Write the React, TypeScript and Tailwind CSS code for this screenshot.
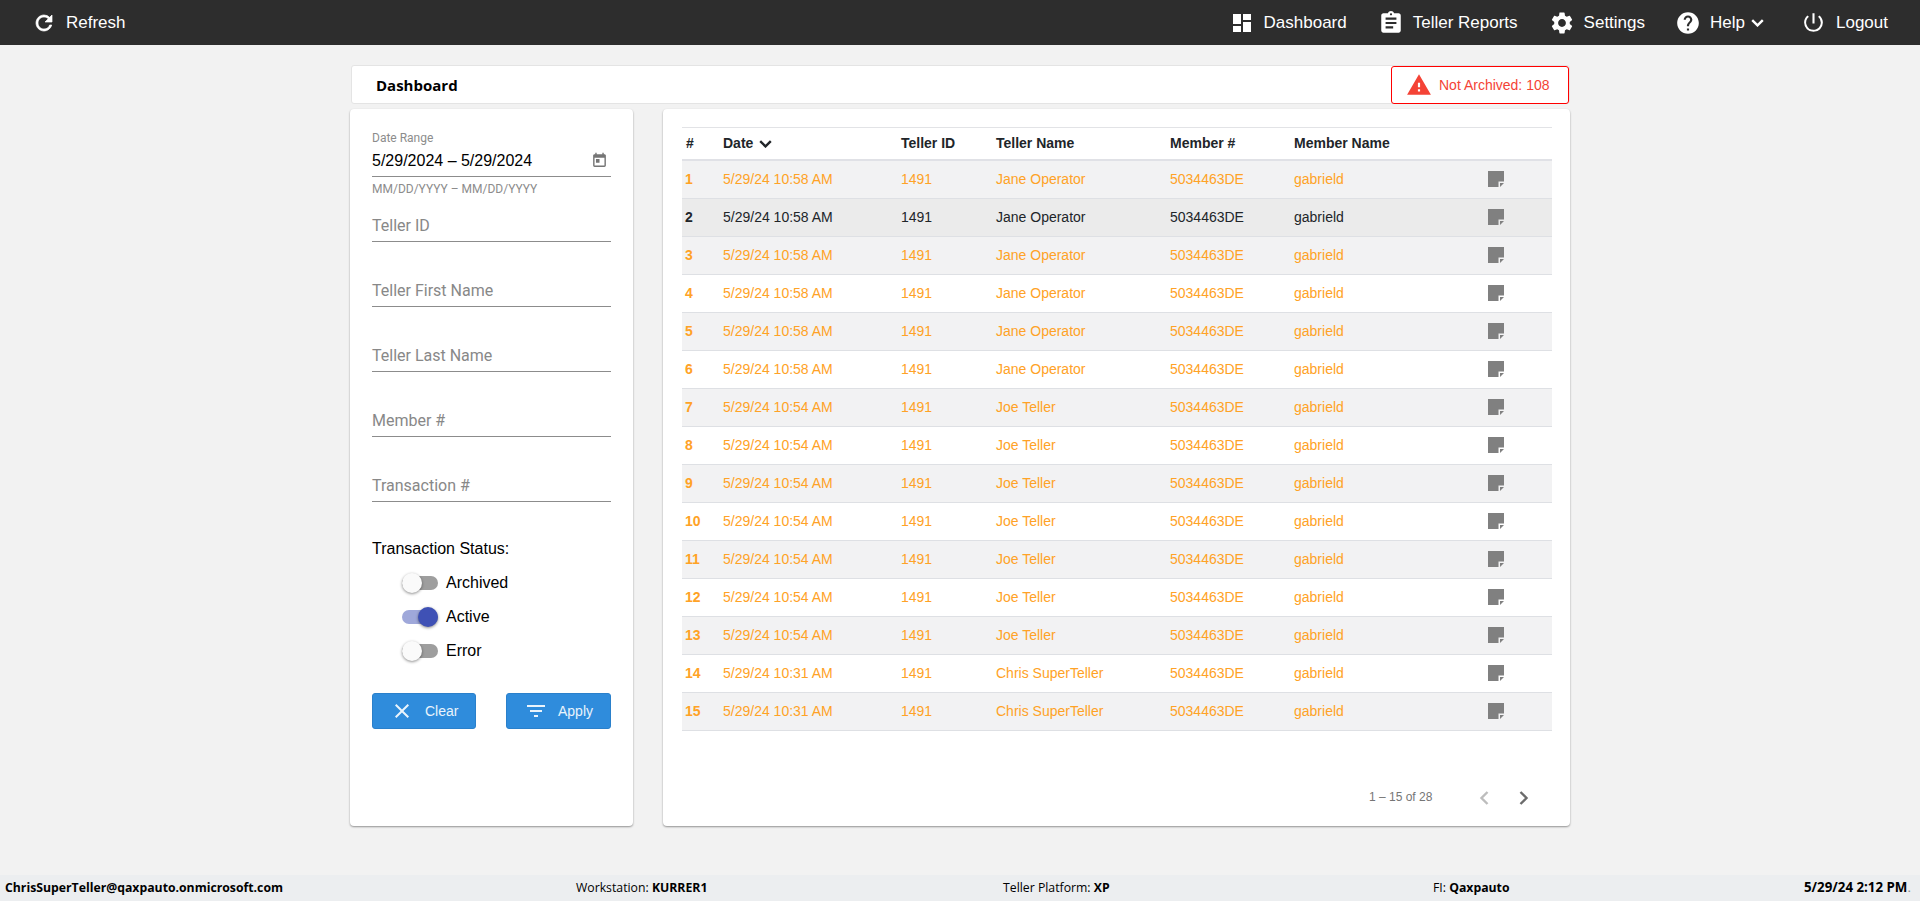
// App.tsx
import React from 'react';
import {
  MdDashboard,
  MdAssignment,
  MdSettings,
  MdHelp,
  MdPowerSettingsNew,
  MdWarning,
  MdToday,
  MdClose,
  MdFilterList,
} from 'react-icons/md';

type Row = { date: string; name: string };

const rows: Row[] = [
  ...Array(6).fill({ date: '5/29/24 10:58 AM', name: 'Jane Operator' }),
  ...Array(7).fill({ date: '5/29/24 10:54 AM', name: 'Joe Teller' }),
  ...Array(2).fill({ date: '5/29/24 10:31 AM', name: 'Chris SuperTeller' }),
];

const RefreshIcon = () => (
  <svg width="24" height="24" viewBox="0 0 24 24" fill="currentColor" stroke="currentColor" strokeWidth="0.7" className="mr-[10px]">
    <path d="M17.65 6.35A7.958 7.958 0 0012 4c-4.42 0-7.99 3.58-7.99 8s3.57 8 7.99 8c3.73 0 6.84-2.55 7.73-6h-2.08A5.99 5.99 0 0112 18c-3.31 0-6-2.69-6-6s2.69-6 6-6c1.66 0 3.14.69 4.22 1.78L13 11h7V4l-2.35 2.35z" />
  </svg>
);

const ChevronDown = ({ className }: { className: string }) => (
  <svg width="13" height="8" viewBox="0 0 13 8" fill="none" stroke="currentColor" strokeWidth="2.4" className={className}>
    <path d="M1.2 1.2l5.3 5.2 5.3-5.2" />
  </svg>
);

const NoteIcon = () => (
  <svg width="16" height="16" viewBox="0 0 16 16" className="shrink-0 -mt-[2px]">
    <path d="M0 0h16v10.5h-5.5V16H0z" fill="#808080" />
    <path d="M12 12h4l-4 4z" fill="#808080" />
  </svg>
);

const NavItem = ({ icon, label, className }: { icon: React.ReactNode; label: string; className: string }) => (
  <div className={`flex items-center ${className}`}>
    {icon}
    <span>{label}</span>
  </div>
);

const FilterField = ({ label }: { label: string }) => (
  <div className="h-[65px] flex flex-col justify-end">
    <div className="border-b border-[#8c8c8c] h-[32px] text-base leading-[32px] text-[#888888]">{label}</div>
  </div>
);

const StatusSwitch = ({ label, on }: { label: string; on?: boolean }) => (
  <div className="h-[34px] flex items-center pl-[30px]">
    <div className="relative w-9 h-[14px] rounded-full mr-2">
      <div className={`absolute inset-0 rounded-full ${on ? 'bg-[#9fa8da]' : 'bg-[#9e9e9e]'}`} />
      <div
        className={`absolute top-[-3px] w-5 h-5 rounded-full shadow-[0_1px_3px_rgba(0,0,0,0.45)] ${
          on ? 'right-0 bg-[#3f51b5]' : 'left-0 bg-[#fafafa]'
        }`}
      />
    </div>
    <span className="text-base text-black font-['Liberation_Sans',sans-serif]">{label}</span>
  </div>
);

export default function App() {
  return (
    <div className="h-screen overflow-hidden flex flex-col bg-[#f2f2f2] font-['Liberation_Sans',Arial,sans-serif]">
      <header className="h-[45px] shrink-0 bg-[#2d2d2d] text-white text-[17px] flex items-center pl-[32px]">
        <NavItem icon={<RefreshIcon />} label="Refresh" className="" />
        <div className="ml-auto flex items-center">
          <NavItem icon={<MdDashboard size={24} className="mr-[10px]" />} label="Dashboard" className="mr-[31px]" />
          <NavItem icon={<MdAssignment size={26} className="mr-[9px]" />} label="Teller Reports" className="mr-[31px]" />
          <NavItem icon={<MdSettings size={26} className="mr-[9px]" />} label="Settings" className="mr-[30px]" />
          <div className="flex items-center mr-[37px]">
            <MdHelp size={26} className="mr-[9px]" />
            <span>Help</span>
            <ChevronDown className="ml-[6px] mt-[1px]" />
          </div>
          <NavItem icon={<MdPowerSettingsNew size={25} className="mr-[10px]" />} label="Logout" className="mr-[32px]" />
        </div>
      </header>

      <main className="flex-1 w-[1220px] mx-auto pt-5">
        <div className="h-[39px] bg-white border border-[#e4e4e4] rounded-[3px] flex items-center justify-between ml-px">
          <span className="pl-[24px] pt-[1px] text-[15px] font-bold text-black font-['Open_Sans',sans-serif]">Dashboard</span>
          <div className="h-[38px] w-[178px] border border-[#f00] rounded-[3px] bg-white flex items-center pl-[14px] text-[14px] text-[#f44336]">
            <MdWarning size={26} className="mr-[7px]" />
            <span className="pt-[1px]">Not Archived: 108</span>
          </div>
        </div>

        <div className="mt-[5px] flex gap-[30px] h-[717px]">
          <aside className="w-[283px] bg-white rounded-[4px] shadow-[0_1px_2px_rgba(0,0,0,0.4)] px-[22px] pt-[22px] font-['Roboto',sans-serif]">
            <div className="text-xs leading-[14px] text-[#8c8c8c]">Date Range</div>
            <div className="h-[32px] border-b border-[#8c8c8c] flex items-center justify-between text-base text-black pr-[3px] font-['Liberation_Sans',sans-serif]">
              <span>5/29/2024 – 5/29/2024</span>
              <MdToday size={17} className="text-[#757575]" />
            </div>
            <div className="mt-[4px] text-xs leading-[16px] text-[#8c8c8c]">MM/DD/YYYY – MM/DD/YYYY</div>
            <div>
              <div className="h-[45px] flex flex-col justify-end">
                <div className="border-b border-[#8c8c8c] h-[32px] text-base leading-[32px] text-[#888888]">Teller ID</div>
              </div>
              <FilterField label="Teller First Name" />
              <FilterField label="Teller Last Name" />
              <FilterField label="Member #" />
              <FilterField label="Transaction #" />
            </div>
            <div className="mt-[37px] text-base leading-5 text-black font-['Liberation_Sans',sans-serif]">Transaction Status:</div>
            <div className="mt-[7px]">
              <StatusSwitch label="Archived" />
              <StatusSwitch label="Active" on />
              <StatusSwitch label="Error" />
            </div>
            <div className="mt-[25px] flex justify-between font-['Liberation_Sans',sans-serif]">
              <button className="w-[104px] h-9 bg-[#2f8cdc] border border-[#2a80cb] rounded-[3px] text-white/90 text-[14px] flex items-center pl-[17px] gap-[11px]">
                <MdClose size={24} />
                <span>Clear</span>
              </button>
              <button className="w-[105px] h-9 bg-[#2f8cdc] border border-[#2a80cb] rounded-[3px] text-white/90 text-[14px] flex items-center pl-[17px] gap-[10px]">
                <MdFilterList size={24} />
                <span>Apply</span>
              </button>
            </div>
          </aside>

          <section className="w-[907px] bg-white rounded-[4px] shadow-[0_1px_2px_rgba(0,0,0,0.4)] pl-[19px] pr-[18px] pt-[18px] flex flex-col">
            <div className="h-[34px] shrink-0 border-t border-b-2 border-t-[#e2e3e6] border-b-[#e0e1e6] flex items-center text-[14px] font-bold text-[#212529]">
              <div className="w-[38px] pl-[4px]">#</div>
              <div className="w-[178px] pl-[3px] flex items-center">
                Date
                <ChevronDown className="ml-[6px] mt-[1px]" />
              </div>
              <div className="w-[95px] pl-[3px]">Teller ID</div>
              <div className="w-[174px] pl-[3px]">Teller Name</div>
              <div className="w-[124px] pl-[3px]">Member #</div>
              <div className="pl-[3px]">Member Name</div>
            </div>
            {rows.map((r, i) => (
              <div
                key={i}
                className={`h-[38px] shrink-0 border-b border-[#dee0e4] flex items-center text-[14px] ${
                  i === 1 ? 'bg-[#ebebeb] text-[#212529]' : 'text-[#ffa226]'
                } ${i !== 1 && i % 2 === 0 ? 'bg-[#f2f2f3]' : ''}`}
              >
                <div className="w-[38px] pl-[3px] font-bold">{i + 1}</div>
                <div className="w-[178px] pl-[3px]">{r.date}</div>
                <div className="w-[95px] pl-[3px]">1491</div>
                <div className="w-[174px] pl-[3px]">{r.name}</div>
                <div className="w-[124px] pl-[3px]">5034463DE</div>
                <div className="w-[197px] pl-[3px]">gabrield</div>
                <NoteIcon />
              </div>
            ))}
            <div className="mt-[60px] flex items-center text-xs text-[#757575] pl-[687px] whitespace-nowrap">
              <span className="-mt-[3px] w-[62px]">1 – 15 of 28</span>
              <svg width="10" height="14" viewBox="0 0 10 14" fill="none" stroke="#bdbdbd" strokeWidth="2.4" className="ml-[48px]">
                <path d="M8.5 1L2.5 7l6 6" />
              </svg>
              <svg width="10" height="14" viewBox="0 0 10 14" fill="none" stroke="#6b6b6b" strokeWidth="2.4" className="ml-[30px]">
                <path d="M1.5 1l6 6-6 6" />
              </svg>
            </div>
          </section>
        </div>
      </main>

      <footer className="h-[26px] shrink-0 bg-[#eceef0] flex items-center pl-[5px] text-[12.25px] text-black font-['Open_Sans',sans-serif] whitespace-nowrap">
        <b className="w-[571px]">ChrisSuperTeller@qaxpauto.onmicrosoft.com</b>
        <span className="w-[427px]">Workstation: <b>KURRER1</b></span>
        <span className="w-[430px]">Teller Platform: <b>XP</b></span>
        <span className="w-[371px]">FI: <b>Qaxpauto</b></span>
        <b className="text-[13.3px]">5/29/24 2:12 PM<span className="font-normal text-[#888888]">.</span></b>
      </footer>
    </div>
  );
}
